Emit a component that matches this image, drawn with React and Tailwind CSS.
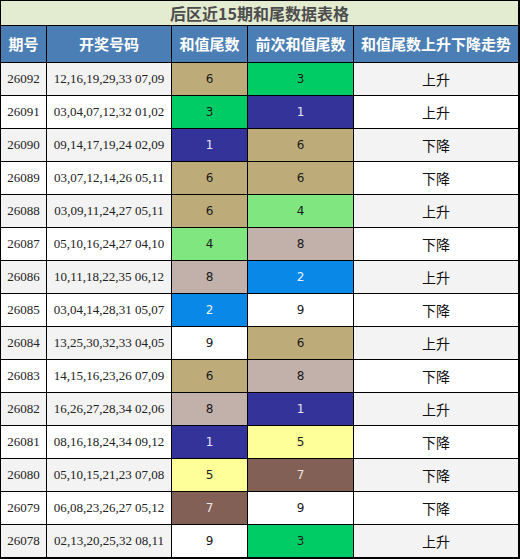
import React from "react";

const rows = [
  ["26092", "12,16,19,29,33 07,09", 6, 3, "上升"],
  ["26091", "03,04,07,12,32 01,02", 3, 1, "上升"],
  ["26090", "09,14,17,19,24 02,09", 1, 6, "下降"],
  ["26089", "03,07,12,14,26 05,11", 6, 6, "下降"],
  ["26088", "03,09,11,24,27 05,11", 6, 4, "上升"],
  ["26087", "05,10,16,24,27 04,10", 4, 8, "下降"],
  ["26086", "10,11,18,22,35 06,12", 8, 2, "上升"],
  ["26085", "03,04,14,28,31 05,07", 2, 9, "下降"],
  ["26084", "13,25,30,32,33 04,05", 9, 6, "上升"],
  ["26083", "14,15,16,23,26 07,09", 6, 8, "下降"],
  ["26082", "16,26,27,28,34 02,06", 8, 1, "上升"],
  ["26081", "08,16,18,24,34 09,12", 1, 5, "下降"],
  ["26080", "05,10,15,21,23 07,08", 5, 7, "下降"],
  ["26079", "06,08,23,26,27 05,12", 7, 9, "下降"],
  ["26078", "02,13,20,25,32 08,11", 9, 3, "上升"],
];

// tail digit -> cell colour
const tailColors = {
  1: "bg-[#333399] text-[#e6e6f0]",
  2: "bg-[#0a88e8] text-[#e8f2fc]",
  3: "bg-[#00cc66] text-[#1a1a1a]",
  4: "bg-[#80e680] text-[#1a1a1a]",
  5: "bg-[#ffff99] text-[#1a1a1a]",
  6: "bg-[#bdac7a] text-[#1a1a1a]",
  7: "bg-[#826055] text-[#ece6e4]",
  8: "bg-[#c2b1aa] text-[#1a1a1a]",
  9: "bg-white text-[#1a1a1a]",
};

function TailCell({ value }) {
  return (
    <div
      className={
        "flex items-center justify-center text-[12px] font-['DejaVu_Sans',sans-serif] " +
        tailColors[value]
      }
    >
      {value}
    </div>
  );
}

export default function App() {
  return (
    <div className="w-[520px] h-[559px] bg-black pt-px pl-px pr-[2px] pb-[2px]">
      <div className="grid h-full grid-cols-[45px_124px_75px_105px_1fr] grid-rows-[24px_36px_repeat(15,32px)] gap-px">
        <div className="col-span-5 flex items-center justify-center bg-[#e3ebd0] text-[16px] font-bold text-[#4d4d4d] font-['Noto_Sans_CJK_SC',sans-serif]">
          后区近15期和尾数据表格
        </div>
        {["期号", "开奖号码", "和值尾数", "前次和值尾数", "和值尾数上升下降走势"].map((h) => (
          <div
            key={h}
            className="flex items-center justify-center bg-[#4a7eb4] text-[15px] font-bold text-white font-['Noto_Sans_CJK_SC',sans-serif]"
          >
            {h}
          </div>
        ))}
        {rows.map((r, i) => {
          const bg = i % 2 === 0 ? "bg-[#f3f3f3]" : "bg-white";
          return (
            <React.Fragment key={r[0]}>
              <div className={"flex items-center justify-center text-[13px] text-[#222] font-['Liberation_Serif',serif] " + bg}>
                {r[0]}
              </div>
              <div className={"flex items-center justify-center text-[13px] text-[#222] font-['Liberation_Serif',serif] " + bg}>
                {r[1]}
              </div>
              <TailCell value={r[2]} />
              <TailCell value={r[3]} />
              <div className={"flex items-center justify-center text-[14px] text-[#111] font-['Noto_Sans_CJK_SC',sans-serif] " + bg}>
                {r[4]}
              </div>
            </React.Fragment>
          );
        })}
      </div>
    </div>
  );
}
